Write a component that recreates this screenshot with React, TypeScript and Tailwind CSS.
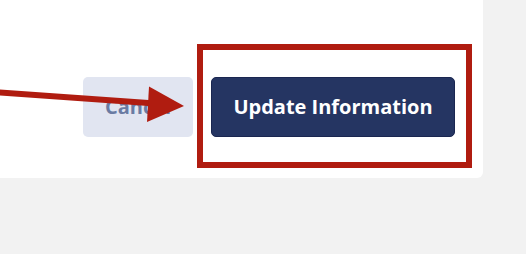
export default function App() {
  return (
    <div className="relative w-[526px] h-[254px] bg-[#f2f2f2] font-['Open_Sans',sans-serif]">
      <div className="w-[483px] h-[178px] bg-white rounded-br-[6px] flex items-start justify-end pr-[11px] pt-[44px]">
        <button className="w-[110px] h-[60px] mr-[4px] mt-[33px] rounded-[5px] bg-[#e1e5f1] text-[#6a7ba3] text-[20px] font-bold">
          Cancel
        </button>
        <div className="border-[6px] border-[#b01c10] pl-[8px] pr-[11px] pt-[27px] pb-[25px]">
          <button className="w-[244px] h-[60px] rounded-[5px] bg-[#253562] border border-[#1a2650] text-white text-[20px] font-bold">
            Update Information
          </button>
        </div>
      </div>
      <svg className="absolute left-0 top-0" width="526" height="254" viewBox="0 0 526 254">
        <line x1="-2" y1="92.4" x2="152" y2="103.2" stroke="#b01c10" strokeWidth="6" />
        <polygon points="149,86.5 147,122 184,106" fill="#b01c10" />
      </svg>
    </div>
  );
}
